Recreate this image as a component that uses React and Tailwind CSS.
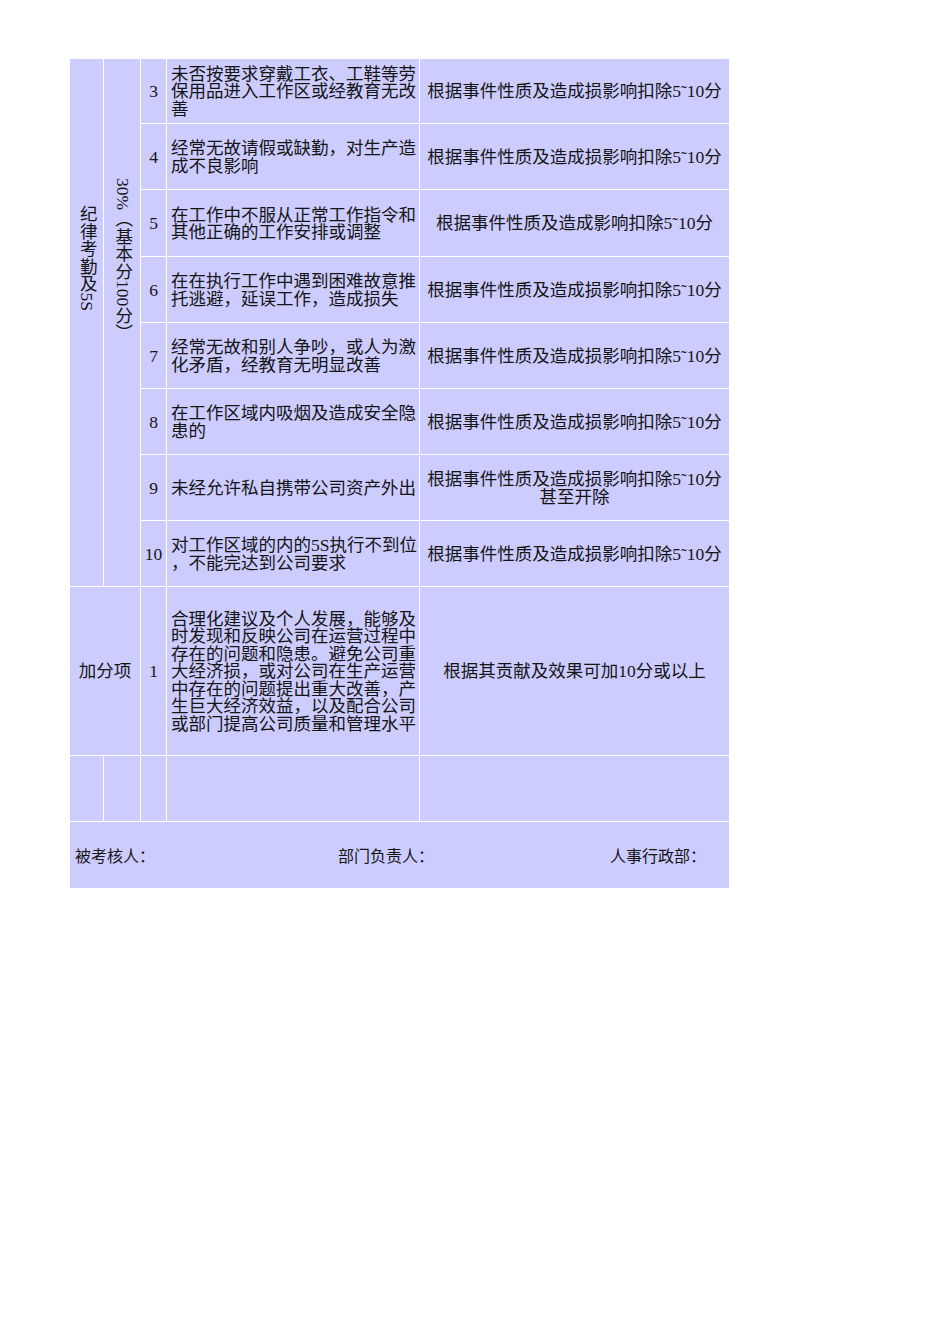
const rows = [
  { no: '3', desc: ['未否按要求穿戴工衣、工鞋等劳', '保用品进入工作区或经教育无改', '善'], rule: ['根据事件性质及造成损影响扣除5˜10分'] },
  { no: '4', desc: ['经常无故请假或缺勤，对生产造', '成不良影响'], rule: ['根据事件性质及造成损影响扣除5˜10分'] },
  { no: '5', desc: ['在工作中不服从正常工作指令和', '其他正确的工作安排或调整'], rule: ['根据事件性质及造成影响扣除5˜10分'] },
  { no: '6', desc: ['在在执行工作中遇到困难故意推', '托逃避，延误工作，造成损失'], rule: ['根据事件性质及造成损影响扣除5˜10分'] },
  { no: '7', desc: ['经常无故和别人争吵，或人为激', '化矛盾，经教育无明显改善'], rule: ['根据事件性质及造成损影响扣除5˜10分'] },
  { no: '8', desc: ['在工作区域内吸烟及造成安全隐', '患的'], rule: ['根据事件性质及造成损影响扣除5˜10分'] },
  { no: '9', desc: ['未经允许私自携带公司资产外出'], rule: ['根据事件性质及造成损影响扣除5˜10分', '甚至开除'] },
  { no: '10', desc: ['对工作区域的内的5S执行不到位', '，不能完达到公司要求'], rule: ['根据事件性质及造成损影响扣除5˜10分'] },
];

const bonusDesc = [
  '合理化建议及个人发展，能够及',
  '时发现和反映公司在运营过程中',
  '存在的问题和隐患。避免公司重',
  '大经济损，或对公司在生产运营',
  '中存在的问题提出重大改善，产',
  '生巨大经济效益，以及配合公司',
  '或部门提高公司质量和管理水平',
];

const cell = 'bg-[#ccccff] flex items-center';

function Lines({ lines }) {
  return lines.map((l, i) => (
    <div key={i} className="whitespace-nowrap">{l}</div>
  ));
}

export default function App() {
  return (
    <div
      className="w-[950px] h-[1344px] bg-white text-[#151515] pt-[59px] pl-[70px]"
      style={{ fontFamily: '"Liberation Serif", "Noto Sans CJK SC", serif' }}
    >
      <div className="grid w-[659px] gap-px bg-white text-[17.5px] leading-[17.5px] grid-cols-[33px_36px_25px_252px_309px] grid-rows-[64px_65px_66px_65px_65px_65px_65px_65px_168px_65px_66px]">
        <div className="bg-[#ccccff] row-span-8 flex justify-center pt-[146px]">
          <div className="[writing-mode:vertical-rl] whitespace-nowrap">纪律考勤及5S</div>
        </div>
        <div className="bg-[#ccccff] row-span-8 flex justify-center pt-[119px]">
          <div className="[writing-mode:vertical-rl] whitespace-nowrap">30%（基本分100分）</div>
        </div>
        {rows.map((r) => (
          <div key={r.no} className="contents">
            <div className={`${cell} justify-center pt-[2px]`}>{r.no}</div>
            <div className={`${cell} pl-[4px] pt-[2px]`}>
              <div><Lines lines={r.desc} /></div>
            </div>
            <div className={`${cell} justify-center text-center pt-[2px]`}>
              <div><Lines lines={r.rule} /></div>
            </div>
          </div>
        ))}
        <div className={`${cell} col-span-2 justify-center pt-[2px]`}>加分项</div>
        <div className={`${cell} justify-center pt-[2px]`}>1</div>
        <div className={`${cell} pl-[4px] pt-[2px]`}>
          <div><Lines lines={bonusDesc} /></div>
        </div>
        <div className={`${cell} justify-center pt-[2px]`}>根据其贡献及效果可加10分或以上</div>
        <div className={cell}></div>
        <div className={cell}></div>
        <div className={cell}></div>
        <div className={cell}></div>
        <div className={cell}></div>
        <div
          className={`${cell} col-span-5 pl-[5px] pt-[2px] text-[16px]`}
          style={{ fontFamily: '"Noto Sans CJK SC", sans-serif' }}
        >
          <div className="w-[263px]">被考核人：</div>
          <div className="w-[272px]">部门负责人：</div>
          <div>人事行政部：</div>
        </div>
      </div>
    </div>
  );
}
